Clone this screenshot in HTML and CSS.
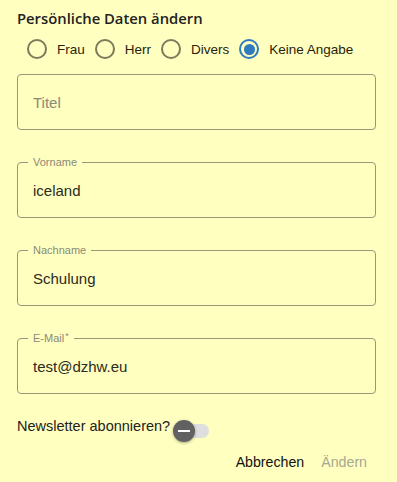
FILE: index.html
```html
<!DOCTYPE html>
<html lang="de">
<head>
    <meta charset="UTF-8">
    <meta name="viewport" content="width=device-width, initial-scale=1.0">
    <title>Persönliche Daten ändern</title>
    <link rel="stylesheet" href="styles.css">
</head>
<body>
    <div class="dialog">
        <h2 class="titel">Persönliche Daten ändern</h2>

        <div class="anrede">
            <label class="radio"><span class="kreis"></span>Frau</label>
            <label class="radio"><span class="kreis"></span>Herr</label>
            <label class="radio"><span class="kreis"></span>Divers</label>
            <label class="radio aktiv"><span class="kreis"></span>Keine Angabe</label>
        </div>

        <div class="feld">
            <span class="platzhalter">Titel</span>
        </div>

        <div class="feld">
            <span class="legende">Vorname</span>
            <span class="wert">iceland</span>
        </div>

        <div class="feld">
            <span class="legende">Nachname</span>
            <span class="wert">Schulung</span>
        </div>

        <div class="feld">
            <span class="legende">E-Mail<sup>*</sup></span>
            <span class="wert">test@dzhw.eu</span>
        </div>

        <div class="newsletter">
            <span>Newsletter abonnieren?</span>
            <span class="schalter"><span class="knopf"></span></span>
        </div>

        <div class="aktionen">
            <button class="btn">Abbrechen</button>
            <button class="btn inaktiv">Ändern</button>
        </div>
    </div>
</body>
</html>
```

FILE: styles.css
```css
* {
    margin: 0;
    padding: 0;
    box-sizing: border-box;
}

body {
    font-family: "Liberation Sans", Arial, sans-serif;
    background-color: #ffffc0;
    color: #222;
}

.dialog {
    padding: 8px 21px 0 17px;
}

.titel {
    font-family: "Open Sans", sans-serif;
    font-weight: 600;
    font-size: 14.8px;
    line-height: 20px;
    color: #222;
}

/* Anrede */
.anrede {
    display: flex;
    align-items: center;
    height: 32px;
    margin: 5px 0 9px 10px;
}

.radio {
    display: flex;
    align-items: center;
    font-size: 13.5px;
    color: #2a1d0a;
    margin-right: 10px;
}

.kreis {
    width: 20px;
    height: 20px;
    border: 2px solid #7b7a5c;
    border-radius: 50%;
    margin-right: 10px;
    display: flex;
    align-items: center;
    justify-content: center;
}

.aktiv .kreis {
    border-color: #2f7bbf;
}

.aktiv .kreis::after {
    content: "";
    width: 11px;
    height: 11px;
    border-radius: 50%;
    background-color: #2f7bbf;
}

/* Eingabefelder */
.feld {
    position: relative;
    height: 56px;
    border: 1px solid #99977a;
    border-radius: 4px;
    margin-bottom: 32px;
    padding: 0 15px;
    display: flex;
    align-items: center;
    font-size: 15px;
}

.platzhalter {
    color: #8a8a78;
}

.wert {
    color: #2b2b22;
}

.legende {
    position: absolute;
    top: -7px;
    left: 10px;
    padding: 0 5px;
    background-color: #ffffc0;
    font-size: 11px;
    line-height: 12px;
    color: #8a8a78;
}

.legende sup {
    font-size: 9px;
    vertical-align: top;
    line-height: 9px;
    margin-left: 1px;
}

/* Newsletter */
.newsletter {
    display: flex;
    align-items: flex-end;
    font-size: 14.5px;
    margin-top: -8px;
    color: #222;
}

.schalter {
    position: relative;
    width: 33px;
    height: 14px;
    border-radius: 7px;
    background-color: #dedede;
    margin: 0 0 -4px 6px;
}

.knopf {
    position: absolute;
    left: -3px;
    top: -4px;
    width: 22px;
    height: 22px;
    border-radius: 50%;
    background-color: #616161;
    box-shadow: 0 1px 3px rgba(0, 0, 0, 0.35);
}

.knopf::after {
    content: "";
    position: absolute;
    left: 5px;
    top: 10px;
    width: 12px;
    height: 2px;
    background-color: #fff;
}

/* Aktionen */
.aktionen {
    display: flex;
    justify-content: flex-end;
    gap: 17px;
    margin: 20px 9px 0 0;
}

.btn {
    background: none;
    border: none;
    font: inherit;
    font-size: 14.2px;
    color: #111;
    cursor: pointer;
}

.btn.inaktiv {
    color: #a8a890;
    cursor: default;
}
```
